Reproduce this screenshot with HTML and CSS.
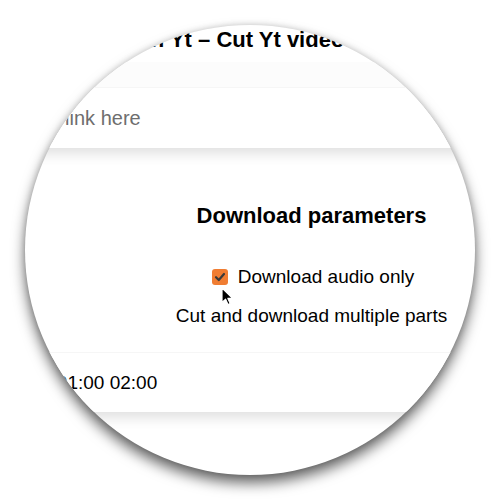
FILE: index.html
```html
<!DOCTYPE html>
<html>
<head>
<meta charset="utf-8">
<link rel="stylesheet" href="styles.css">
</head>
<body>
<div class="stage">
  <div class="lens">
    <div class="page">
      <h1 class="title">Open Yt – Cut Yt videos</h1>
      <div class="url-band">
        <div class="url-input">Paste video link here</div>
      </div>
      <div class="params">
        <h2 class="params-title">Download parameters</h2>
        <div class="check-row">
          <span class="box"><svg width="16" height="16" viewBox="0 0 16 16"><path d="M4 8.2 L6.8 11 L12 5" fill="none" stroke="#3a3a3a" stroke-width="2.2" stroke-linecap="round" stroke-linejoin="round"/></svg></span>
          <span>Download audio only</span>
        </div>
        <div class="multi">Cut and download multiple parts</div>
      </div>
      <div class="parts-box">00:30 01:00 02:00</div>
    </div>
    <svg class="cursor" width="13" height="19" viewBox="0 0 13 19"><path d="M1 1 L1 15.5 L4.6 12.2 L7 17.6 L9.2 16.6 L6.9 11.4 L11.6 11.4 Z" fill="#000" stroke="#fff" stroke-width="1.2" stroke-linejoin="round"/></svg>
  </div>
</div>
</body>
</html>
```
FILE: styles.css
```css
body {
  margin: 0;
  background: #fff;
  font-family: "Liberation Sans", Arial, sans-serif;
  color: #000;
}
.stage {
  padding: 25px;
}
.lens {
  width: 450px;
  height: 450px;
  border-radius: 50%;
  overflow: hidden;
  position: relative;
  background: #fff;
  box-shadow: 0 8px 14px rgba(0, 0, 0, 0.6), 0 0 6px rgba(0, 0, 0, 0.15);
}
.page {
  width: 450px;
}
.title {
  margin: 0;
  padding: 2px 0 0 83px;
  font-size: 22px;
  line-height: 25px;
  font-weight: bold;
  white-space: nowrap;
}
.url-band {
  margin-top: 10px;
  padding-top: 25px;
  background: #fcfcfc;
}
.url-input {
  margin-left: -100px;
  width: 700px;
  height: 61px;
  padding-left: 30px;
  box-sizing: border-box;
  background: #fff;
  border-top: 1px solid #f6f6f6;
  font-size: 20px;
  line-height: 60px;
  color: #6e6e6e;
  white-space: nowrap;
  box-shadow: 0 9px 12px -3px rgba(0, 0, 0, 0.12);
}
.params {
  margin-top: 55px;
  margin-left: 123px;
  width: 327px;
  text-align: center;
}
.params-title {
  margin: 0;
  font-size: 22px;
  line-height: 25px;
  font-weight: bold;
}
.check-row {
  margin-top: 38px;
  display: flex;
  justify-content: center;
  align-items: center;
  gap: 10px;
  padding-left: 3px;
  font-size: 19px;
  line-height: 22px;
}
.box {
  width: 16px;
  height: 16px;
  border-radius: 3px;
  background: #f07d32;
  display: block;
}
.box svg {
  display: block;
}
.multi {
  margin-top: 17px;
  font-size: 19px;
  line-height: 22px;
  white-space: nowrap;
}
.parts-box {
  margin-top: 25px;
  margin-left: -100px;
  width: 700px;
  height: 60px;
  padding-left: 79px;
  box-sizing: border-box;
  background: #fff;
  border-top: 1px solid #f6f6f6;
  font-size: 19px;
  line-height: 59px;
  white-space: nowrap;
  box-shadow: 0 9px 12px -3px rgba(0, 0, 0, 0.12);
}
.cursor {
  position: absolute;
  left: 196px;
  top: 262px;
}
```
